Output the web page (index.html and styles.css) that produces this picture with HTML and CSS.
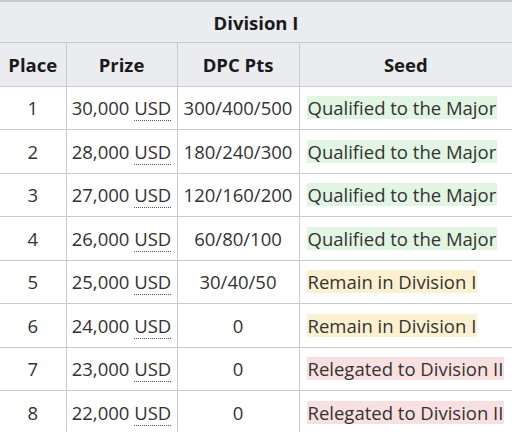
FILE: index.html
```html
<!DOCTYPE html>
<html>
<head>
<meta charset="utf-8">
<link rel="stylesheet" href="styles.css">
</head>
<body>
<table class="prize">
  <colgroup>
    <col class="c-place"><col class="c-prize"><col class="c-pts"><col class="c-seed">
  </colgroup>
  <thead>
    <tr><th colspan="4" class="title">Division I</th></tr>
    <tr><th>Place</th><th>Prize</th><th>DPC Pts</th><th>Seed</th></tr>
  </thead>
  <tbody>
    <tr><td class="ctr">1</td><td class="ctr">30,000 <abbr>USD</abbr></td><td class="ctr">300/400/500</td><td class="seed"><span class="hl up">Qualified to the Major</span></td></tr>
    <tr><td class="ctr">2</td><td class="ctr">28,000 <abbr>USD</abbr></td><td class="ctr">180/240/300</td><td class="seed"><span class="hl up">Qualified to the Major</span></td></tr>
    <tr><td class="ctr">3</td><td class="ctr">27,000 <abbr>USD</abbr></td><td class="ctr">120/160/200</td><td class="seed"><span class="hl up">Qualified to the Major</span></td></tr>
    <tr><td class="ctr">4</td><td class="ctr">26,000 <abbr>USD</abbr></td><td class="ctr">60/80/100</td><td class="seed"><span class="hl up">Qualified to the Major</span></td></tr>
    <tr><td class="ctr">5</td><td class="ctr">25,000 <abbr>USD</abbr></td><td class="ctr">30/40/50</td><td class="seed"><span class="hl stay">Remain in Division I</span></td></tr>
    <tr><td class="ctr">6</td><td class="ctr">24,000 <abbr>USD</abbr></td><td class="ctr">0</td><td class="seed"><span class="hl stay">Remain in Division I</span></td></tr>
    <tr><td class="ctr">7</td><td class="ctr">23,000 <abbr>USD</abbr></td><td class="ctr">0</td><td class="seed"><span class="hl down">Relegated to Division II</span></td></tr>
    <tr><td class="ctr">8</td><td class="ctr">22,000 <abbr>USD</abbr></td><td class="ctr">0</td><td class="seed"><span class="hl down">Relegated to Division II</span></td></tr>
  </tbody>
</table>
</body>
</html>
```
FILE: styles.css
```css
html, body {
  margin: 0;
  padding: 0;
  background: #ffffff;
}
body {
  font-family: "Open Sans", "Noto Sans", sans-serif;
  color: #333;
  overflow: hidden;
}
.prize {
  width: 512px;
  border-collapse: collapse;
  table-layout: fixed;
  font-size: 18.5px;
  border-top: 2px solid #c8ccd1;
}
.c-place { width: 66px; }
.c-prize { width: 111px; }
.c-pts { width: 122px; }
.c-seed { width: 213px; }
.prize th, .prize td {
  border: 1px solid #c8ccd1;
  padding: 0 4px;
  height: 43.5px;
  box-sizing: border-box;
  white-space: nowrap;
  overflow: hidden;
}
.prize tr > :first-child { border-left: none; }
.prize tr > :last-child { border-right: none; }
.prize th {
  background: #eaecf0;
  font-weight: 700;
  text-align: center;
  color: #1a1a1a;
}
.prize thead tr:first-child th { border-top: none; height: 41.5px; }
.prize td.ctr { text-align: center; }
.prize td.seed { text-align: left; padding-left: 7px; padding-right: 0; }
abbr {
  text-decoration: none;
  border-bottom: 1px dotted #555;
}
.hl {
  display: inline-block;
  line-height: 23px;
  padding: 0 1px;
}
.up { background: #e2f5e2; }
.stay { background: #fbf1d0; }
.down { background: #f9e0e0; }
```
